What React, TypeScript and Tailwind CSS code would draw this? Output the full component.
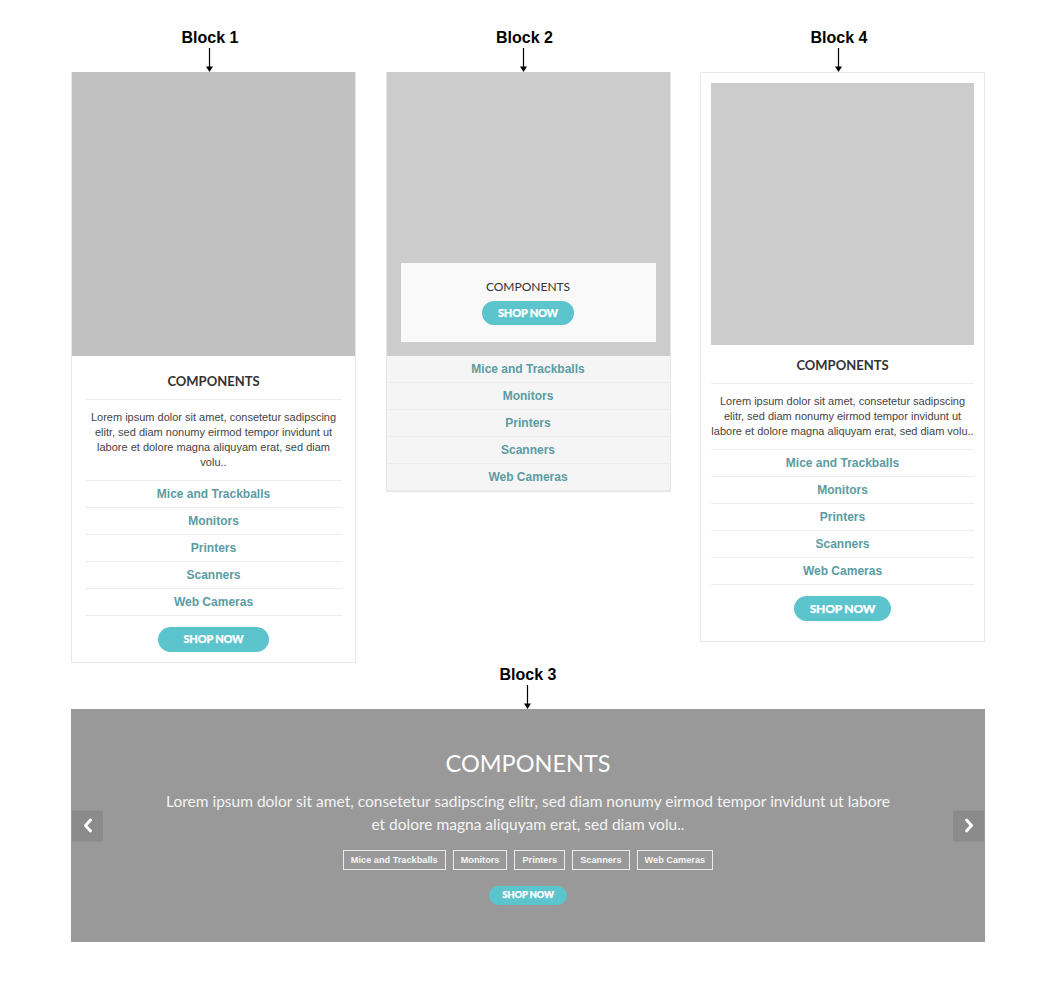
import React from "react";

const LINKS = ["Mice and Trackballs", "Monitors", "Printers", "Scanners", "Web Cameras"];
const LOREM =
  "Lorem ipsum dolor sit amet, consetetur sadipscing elitr, sed diam nonumy eirmod tempor invidunt ut labore et dolore magna aliquyam erat, sed diam volu..";

function Label({ text, className = "" }: { text: string; className?: string }) {
  return (
    <div className={`flex flex-col items-center ${className}`}>
      <div className="h-[18px] text-[16px] leading-[18px] font-bold text-black font-['Liberation_Sans',Arial,sans-serif]">
        {text}
      </div>
      <svg width="9" height="24" viewBox="0 0 9 24" className="mt-[1px] -ml-[2px]">
        <line x1="4.5" y1="0" x2="4.5" y2="19" stroke="#000" strokeWidth="1.2" />
        <polygon points="1,18.5 8,18.5 4.5,24" fill="#000" />
      </svg>
    </div>
  );
}

function ShopButton({ className = "" }: { className?: string }) {
  return (
    <button
      className={`rounded-full bg-[#5bc4cc] text-white font-black font-['Lato',sans-serif] tracking-[-0.2px] [-webkit-text-stroke:0.25px_#ffffff] ${className}`}
    >
      SHOP NOW
    </button>
  );
}

function LinkRows({ rowClass = "" }: { rowClass?: string }) {
  return (
    <>
      {LINKS.map((l) => (
        <div
          key={l}
          className={`h-[27px] leading-[26px] border-b border-[#ececec] text-center text-[12px] font-bold text-[#5a9ca3] font-['Liberation_Sans',Arial,sans-serif] ${rowClass}`}
        >
          {l}
        </div>
      ))}
    </>
  );
}

function Block1() {
  return (
    <div className="w-[285px] border-x border-b border-[#e8e8e8] bg-white">
      <div className="h-[284px] bg-[#c0c0c0]" />
      <div className="px-[13px] pb-[10px]">
        <div className="pt-[17px] pb-[10px] border-b border-[#eeeeee] text-center font-['Lato',sans-serif] font-bold text-[13px] leading-[16px] text-[#333]">
          COMPONENTS
        </div>
        <p className="py-[10px] border-b border-[#eeeeee] text-center text-[11px] leading-[15px] text-[#444] font-['Liberation_Sans',Arial,sans-serif]">
          {LOREM}
        </p>
        <LinkRows />
        <div className="mt-[11px] flex justify-center">
          <ShopButton className="h-[25px] px-[26px] text-[11px]" />
        </div>
      </div>
    </div>
  );
}

function Block2() {
  return (
    <div className="w-[285px] border-x border-b border-[#e6e6e6]">
      <div className="relative h-[284px] bg-[#cccccc]">
        <div className="absolute left-[14px] bottom-[14px] w-[255px] bg-[#f9f9f9] pt-[16px] pb-[17px] flex flex-col items-center">
          <div className="text-[12px] leading-[16px] font-['Lato',sans-serif] text-[#333]">COMPONENTS</div>
          <ShopButton className="mt-[6px] h-[24px] px-[16px] text-[11px]" />
        </div>
      </div>
      <LinkRows rowClass="bg-[#f5f5f5] border-[#e6e6e6]" />
    </div>
  );
}

function Block4() {
  return (
    <div className="w-[285px] border border-[#e8e8e8] bg-white p-[10px]">
      <div className="h-[262px] bg-[#cccccc]" />
      <div className="pb-[10px]">
        <div className="pt-[12px] pb-[10px] border-b border-[#eeeeee] text-center font-['Lato',sans-serif] font-bold text-[13px] leading-[16px] text-[#333]">
          COMPONENTS
        </div>
        <p className="py-[10px] border-b border-[#eeeeee] text-center text-[11px] leading-[15px] text-[#444] font-['Liberation_Sans',Arial,sans-serif]">
          {LOREM}
        </p>
        <LinkRows />
        <div className="mt-[11px] flex justify-center">
          <ShopButton className="h-[25px] px-[16px] text-[12px]" />
        </div>
      </div>
    </div>
  );
}

function Chevron({ dir }: { dir: "left" | "right" }) {
  return (
    <svg width="12" height="16" viewBox="0 0 12 16">
      {dir === "left" ? (
        <polyline points="8.5,2.5 3.5,8 8.5,13.5" fill="none" stroke="#fff" strokeWidth="3" strokeLinecap="round" strokeLinejoin="round" />
      ) : (
        <polyline points="3.5,2.5 8.5,8 3.5,13.5" fill="none" stroke="#fff" strokeWidth="3" strokeLinecap="round" strokeLinejoin="round" />
      )}
    </svg>
  );
}

function Block3() {
  return (
    <div className="relative w-[914px] bg-[#999999] pt-[39px] pb-[37px] flex flex-col items-center">
      <div className="text-[23.5px] leading-[30px] text-white font-['Lato',sans-serif]">COMPONENTS</div>
      <p className="mt-[12px] w-[736px] text-center text-[15.5px] leading-[23px] text-[#f4f4f4] font-['Lato',sans-serif]">
        {LOREM}
      </p>
      <div className="mt-[14px] flex gap-[7px]">
        {LINKS.map((l) => (
          <div
            key={l}
            className="h-[20px] leading-[18px] px-[7px] border border-[#ececec] text-[9.2px] font-bold text-[#f4f4f4] font-['Liberation_Sans',Arial,sans-serif]"
          >
            {l}
          </div>
        ))}
      </div>
      <ShopButton className="mt-[16px] h-[19px] px-[13px] text-[9.5px]" />
      <div className="absolute left-[1px] top-1/2 -translate-y-1/2 w-[31px] h-[31px] bg-[#8b8b8b] flex items-center justify-center">
        <Chevron dir="left" />
      </div>
      <div className="absolute right-[1px] top-1/2 -translate-y-1/2 w-[31px] h-[31px] bg-[#8b8b8b] flex items-center justify-center">
        <Chevron dir="right" />
      </div>
    </div>
  );
}

export default function App() {
  return (
    <div className="min-h-screen bg-white pt-[29px]">
      <div className="ml-[71px] w-[914px]">
        <div className="flex justify-between items-start">
          <div className="w-[285px] flex flex-col">
            <Label text="Block 1" className="pr-[7px]" />
            <Block1 />
          </div>
          <div className="w-[285px] flex flex-col">
            <Label text="Block 2" className="pr-[7px]" />
            <Block2 />
          </div>
          <div className="w-[285px] flex flex-col">
            <Label text="Block 4" className="pr-[7px]" />
            <Block4 />
          </div>
        </div>
        <Label text="Block 3" className="mt-[3px]" />
        <Block3 />
      </div>
    </div>
  );
}
